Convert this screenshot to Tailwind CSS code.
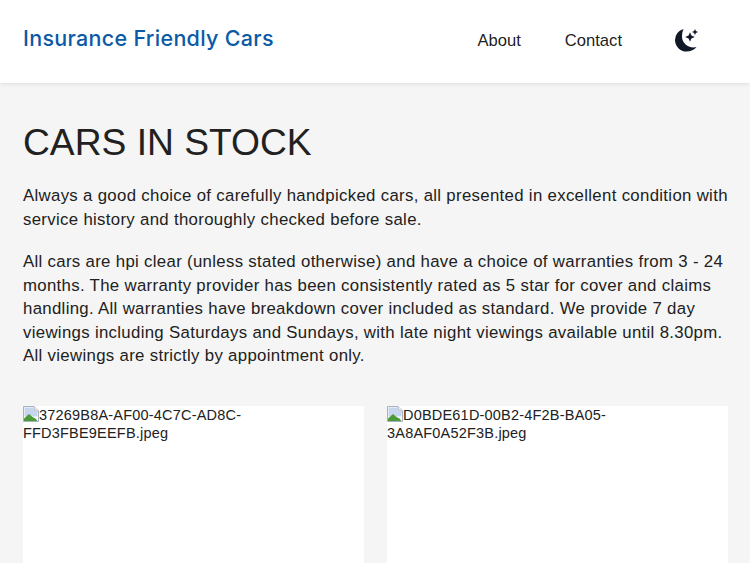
<!DOCTYPE html>
<html>
<head>
  <meta name="viewport" content="width=device-width, initial-scale=1">
  <title>Cars in stock</title>
  <script src="https://cdn.jsdelivr.net/npm/@tailwindcss/browser@4"></script>
</head>
<body class="bg-[#f5f5f5] h-[563px] overflow-hidden font-['Liberation_Sans',sans-serif] text-[#212121]">

  <header class="bg-white h-[83px] shadow-[0_1px_4px_rgba(0,0,0,0.1)] flex items-center pl-[23px]">
    <a class="font-['Inter',sans-serif] font-medium text-[21.5px] tracking-[0.3px] text-[#0a5aa8] -mt-[6px]">Insurance Friendly Cars</a>
    <nav class="ml-auto flex items-center text-black/90 text-[16.6px]">
      <a class="mr-[44px] -mt-px">About</a>
      <a class="mr-[53px] -mt-px">Contact</a>
      <svg class="w-[24px] h-[24px] mr-[51px] -mt-[2px]" viewBox="0 0 24 24" fill="#111827">
        <path d="M8.500 1A11.500 11.500 0 0 0 0 12 11.500 11.500 0 0 0 11.500 23.500c4.200 0 7.800-1.700 10-4.500-1 .3-2 .4-3 .4C12 19.400 7 14.500 7 8.500c0-2.800.5-5.400 1.500-7.500z"/>
        <path d="M15 4.200l1.400 3.400 3.400 1.400-3.400 1.400L15 13.800l-1.400-3.400L10.200 9l3.400-1.400zM20 1l.9 2.100 2.100.9-2.100.9-.9 2.100-.9-2.100-2.100-.9 2.100-.9z"/>
      </svg>
    </nav>
  </header>

  <main class="pl-[23px] pr-[22px]">
    <h1 class="text-[37.2px] leading-[44px] mt-[37px]">CARS IN STOCK</h1>
    <p class="text-[16.8px] leading-[23.5px] tracking-[0.32px] mt-[20px]">Always a good choice of carefully handpicked cars, all presented in excellent condition with service history and thoroughly checked before sale.</p>
    <p class="text-[16.8px] leading-[23.5px] tracking-[0.32px] mt-[19px]">All cars are hpi clear (unless stated otherwise) and have a choice of warranties from 3 - 24 months. The warranty provider has been consistently rated as 5 star for cover and claims handling. All warranties have breakdown cover included as standard. We provide 7 day viewings including Saturdays and Sundays, with late night viewings available until 8.30pm. All viewings are strictly by appointment only.</p>

    <div class="grid grid-cols-2 gap-[23px] mt-[38px]">
      <div class="bg-white h-[300px] text-[14.5px] tracking-[0.2px] leading-[18px]">
        <svg class="inline-block w-4 h-4 align-[-2px]" viewBox="0 0 16 16"><path d="M.5.500h10.500l4.500 4.500v10.500H.500z" fill="#fff" stroke="#a9b1bd"/><path d="M11 .5v4.500h4.500" fill="#e4e8ee" stroke="#a9b1bd"/><path d="M1.500 1.500h9v4h4v5H1.500z" fill="#c6d6ef"/><path d="M1 15v-2.500l5-4.500 3.500 3 3 1.500 2 2.500z" fill="#4c9a3a"/></svg>37269B8A-AF00-4C7C-AD8C-FFD3FBE9EEFB.jpeg
      </div>
      <div class="bg-white h-[300px] text-[14.5px] tracking-[0.2px] leading-[18px]">
        <svg class="inline-block w-4 h-4 align-[-2px]" viewBox="0 0 16 16"><path d="M.5.500h10.500l4.500 4.500v10.500H.500z" fill="#fff" stroke="#a9b1bd"/><path d="M11 .5v4.500h4.500" fill="#e4e8ee" stroke="#a9b1bd"/><path d="M1.500 1.500h9v4h4v5H1.500z" fill="#c6d6ef"/><path d="M1 15v-2.500l5-4.500 3.500 3 3 1.500 2 2.500z" fill="#4c9a3a"/></svg>D0BDE61D-00B2-4F2B-BA05-3A8AF0A52F3B.jpeg
      </div>
    </div>
  </main>

</body>
</html>
